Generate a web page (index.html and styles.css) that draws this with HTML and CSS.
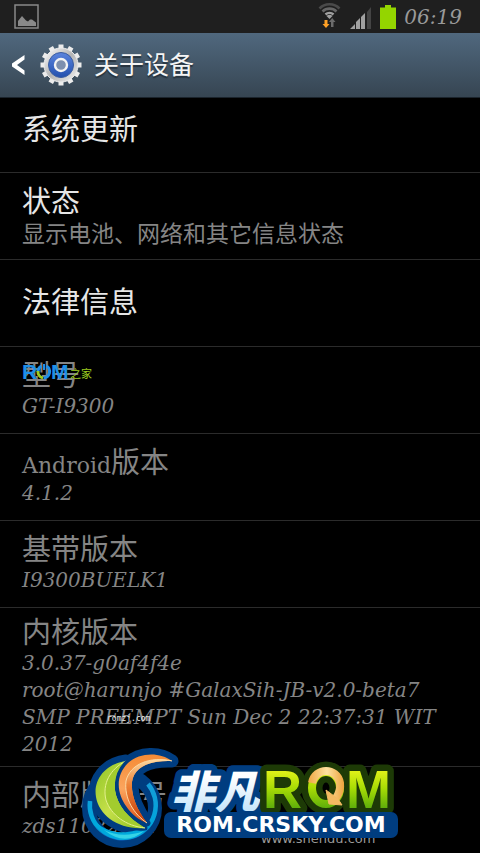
FILE: index.html
```
<!DOCTYPE html>
<html lang="zh-CN">
<head>
<meta charset="utf-8">
<meta name="viewport" content="width=device-width, initial-scale=1">
<title>关于设备</title>
<link rel="stylesheet" href="styles.css">
</head>
<body>
<div class="screen">
  <div class="status">
    <svg class="status-picture" width="26" height="26" viewBox="0 0 26 26" aria-hidden="true">
      <rect x="1" y="1" width="23" height="23" fill="none" stroke="#898989" stroke-width="1.5"/>
      <path d="M4 22v-5l4-5 4 4.500 2 1 2-2h2l4 3v3.500z" fill="#898989"/>
    </svg>
    <div class="status-right">
      <svg width="24" height="26" viewBox="0 0 24 26" aria-hidden="true">
        <g fill="none" stroke-width="2.600">
          <path d="M1.500 5.500a14 14 0 0 1 20 0" stroke="#4a4a4a"/>
          <path d="M4.500 8.500a10 10 0 0 1 14 0" stroke="#666"/>
          <path d="M7.500 11.500a6 6 0 0 1 8 0" stroke="#a0a0a0"/>
        </g>
        <path d="M8.500 13a4.500 4.500 0 0 1 6 0l-3 3z" fill="#a0a0a0"/>
        <path d="M6.500 17h3v4h2l-3.500 4-3.500-4h2z" fill="#ffa126"/>
        <path d="M13 24h2.500v-5h2l-3.300-4-3.200 4h2z" fill="#6b6b6b"/>
      </svg>
      <svg width="22" height="22" viewBox="0 0 22 22" aria-hidden="true">
        <path d="M0 22l5-5v5zM6 22v-7l4-4v11zM11 22V10l4-4v16z" fill="#a0a0a0"/>
        <path d="M17 22V5l4-5v22z" fill="#444"/>
      </svg>
      <svg width="16" height="24" viewBox="0 0 16 24" aria-hidden="true">
        <path d="M5 0h6v2.500h5V24H0V2.500h5z" fill="#94d500"/>
      </svg>
      <span class="clock">06:19</span>
    </div>
  </div>

  <header class="header">
    <a class="back" href="#" aria-label="返回">
      <svg width="13" height="20" viewBox="0 0 13 20"><path d="M12.500 0v4.500L5 10l7.500 5.500V20L0 11.500v-3z" fill="#fff"/></svg>
    </a>
    <svg class="gear" width="42" height="42" viewBox="-21 -21 42 42" aria-hidden="true">
      <defs>
        <linearGradient id="metal" x1="0" y1="0" x2="1" y2="1"><stop offset="0" stop-color="#fff"/><stop offset=".5" stop-color="#b4b4b4"/><stop offset="1" stop-color="#f4f4f4"/></linearGradient>
        <linearGradient id="blue" x1="0" y1="0" x2="0" y2="1"><stop offset="0" stop-color="#5b84dd"/><stop offset="1" stop-color="#2350ae"/></linearGradient>
      </defs>
      <g stroke="#ececec" stroke-width="5">
        <path d="M0-20.500V20.500"/>
        <path d="M0-20.500V20.500" transform="rotate(30)"/>
        <path d="M0-20.500V20.500" transform="rotate(60)"/>
        <path d="M0-20.500V20.500" transform="rotate(90)"/>
        <path d="M0-20.500V20.500" transform="rotate(120)"/>
        <path d="M0-20.500V20.500" transform="rotate(150)"/>
      </g>
      <circle r="17" fill="url(#metal)" stroke="#ececec"/>
      <circle r="12.500" fill="url(#blue)" stroke="#3a5ca0"/>
      <circle r="6" fill="#7d8fae" stroke="#f3f3f3" stroke-width="2.400"/>
    </svg>
    <h1 class="header-title">关于设备</h1>
  </header>

  <main class="list">
    <section class="row row-first"><h2 class="title">系统更新</h2></section>
    <section class="row"><h2 class="title">状态</h2><p class="note">显示电池、网络和其它信息状态</p></section>
    <section class="row"><h2 class="title">法律信息</h2></section>
    <section class="row dim">
      <h2 class="title">型号
        <svg class="mark-home" width="72" height="22" viewBox="0 0 72 22">
          <text class="mark-rom" x="0" y="18">R</text>
          <text class="mark-rom" x="29" y="18">M</text>
          <path d="M19.500 5a6.500 6.500 0 0 0-3.500 6" fill="none" stroke="#1e8fe8" stroke-width="3"/>
          <path d="M16 10a6.500 6.500 0 0 0 5 7" fill="none" stroke="#9ccc1f" stroke-width="3"/>
          <path d="M24.500 5a6.500 6.500 0 0 1-3 12" fill="none" stroke="#1e8fe8" stroke-width="3"/>
          <path d="M22 3v6" fill="none" stroke="#1e8fe8" stroke-width="2"/>
          <text class="mark-zh" x="48" y="17">之家</text>
        </svg>
      </h2>
      <p class="value">GT-I9300</p>
    </section>
    <section class="row dim"><h2 class="title"><span class="latin">Android</span>版本</h2><p class="value">4.1.2</p></section>
    <section class="row dim"><h2 class="title">基带版本</h2><p class="value">I9300BUELK1</p></section>
    <section class="row dim row-kernel">
      <h2 class="title">内核版本</h2>
      <p class="value">3.0.37-g0af4f4e<br>root@harunjo #GalaxSih-JB-v2.0-beta7<br>SMP PREEMPT Sun Dec 2 22:37:31 WIT<br>2012</p>
      <span class="mark-small">romzj.com</span>
    </section>
    <section class="row dim"><h2 class="title">内部版本号</h2><p class="value">zds11022011</p></section>
  </main>

  <div class="banner">
    <span class="mark-site">www.shendu.com</span>
    <svg class="logo" width="320" height="106" viewBox="80 747 320 106">
      <defs>
        <linearGradient id="lime" x1="0" y1="0" x2="1" y2="1"><stop offset="0" stop-color="#8fc424"/><stop offset=".5" stop-color="#c5e04a"/><stop offset="1" stop-color="#8cbf1c"/></linearGradient>
        <linearGradient id="orange" x1="0" y1="0" x2="0" y2="1"><stop offset="0" stop-color="#f58b35"/><stop offset=".5" stop-color="#fba55e"/><stop offset="1" stop-color="#e0561a"/></linearGradient>
        <linearGradient id="ember" x1="0" y1="0" x2="0" y2="1"><stop offset="0" stop-color="#fdd9a0"/><stop offset=".4" stop-color="#ee8338"/><stop offset="1" stop-color="#c43c08"/></linearGradient>
        <linearGradient id="ring" x1="0" y1="0" x2="0" y2="1"><stop offset="0" stop-color="#159dd8"/><stop offset=".75" stop-color="#00a5dc"/><stop offset="1" stop-color="#0a62c0"/></linearGradient>
        <linearGradient id="ice" x1="0" y1="0" x2="0" y2="1"><stop offset=".3" stop-color="#fff"/><stop offset="1" stop-color="#b5def9"/></linearGradient>
        <linearGradient id="green" gradientUnits="userSpaceOnUse" x1="0" y1="768" x2="0" y2="808"><stop offset="0" stop-color="#eaf51c"/><stop offset=".5" stop-color="#a8dc05"/><stop offset="1" stop-color="#5fae0a"/></linearGradient>
        <linearGradient id="gold" gradientUnits="userSpaceOnUse" x1="310" y1="0" x2="344" y2="0"><stop offset="0" stop-color="#f0ad4c"/><stop offset=".5" stop-color="#ffe2a0"/><stop offset="1" stop-color="#eda33e"/></linearGradient>
      </defs>
      <circle cx="122" cy="808" r="33" fill="none" stroke="#003d80" stroke-width="14"/>
      <g fill="#003d80" stroke="#003d80" stroke-width="13" stroke-linejoin="round">
        <path d="M172 761C160 752 140 752 128 763C114 777 118 795 126 806C132 815 139 820 147 823C136 808 131 795 132 782C134 768 148 760 172 761z"/>
        <path d="M126 761C105 764 93 780 96 797C99 815 118 830 145 828C128 818 117 805 115 790C114 778 118 770 126 761z"/>
      </g>
      <path d="M148 784a33 33 0 1 1-58 17" fill="none" stroke="url(#ring)" stroke-width="4.500"/>
      <path d="M89 812C98 831 122 840 151 824C138 848 98 846 89 812z" fill="#00a9dc"/>
      <path d="M104 830q18 9 40 1q-19 16-40-1z" fill="#36d3e6"/>
      <path d="M126 761C105 764 93 780 96 797C99 815 118 830 145 828C128 818 117 805 115 790C114 778 118 770 126 761z" fill="url(#lime)" stroke="#003d80" stroke-width="5" stroke-linejoin="round" paint-order="stroke"/>
      <path d="M126 761C110 769 102 784 106 800C111 815 126 826 145 828C128 818 117 805 115 790C114 778 118 770 126 761z" fill="#a2cc2e"/>
      <path d="M126 761C110 769 102 784 106 800C111 815 126 826 145 828" fill="none" stroke="#e4f08e"/>
      <path d="M172 761C160 752 140 752 128 763C114 777 118 795 126 806C132 815 139 820 147 823C136 808 131 795 132 782C134 768 148 760 172 761z" fill="url(#orange)" stroke="#003d80" stroke-width="7" stroke-linejoin="round" paint-order="stroke"/>
      <path d="M172 761C150 756 130 764 126 781C124 799 134 814 147 823C136 808 131 795 132 782C134 768 148 760 172 761z" fill="url(#ember)"/>
      <path d="M172 761C150 756 130 764 126 781C124 799 134 814 147 823" fill="none" stroke="#fcd9a4"/>

      <text class="logo-zh" x="171" y="808">非凡</text>

      <ellipse cx="326" cy="788" rx="14" ry="16" fill="none" stroke="#1d3a06" stroke-width="21"/>
      <g class="logo-green">
        <text x="263" y="808">R</text>
        <text x="346" y="808">M</text>
      </g>
      <ellipse cx="326" cy="788" rx="14" ry="16" fill="none" stroke="url(#green)" stroke-width="8"/>
      <path d="M312 783C315 767 337 767 340 783Q341 791 336 798" fill="none" stroke="url(#gold)" stroke-width="8"/>
      <path d="M326 790l3 14 13 1-4-6z" fill="#f5bb62" stroke="#f5bb62" stroke-linejoin="round"/>

      <rect x="164" y="812" width="234" height="26" rx="7" fill="#003d80"/>
      <text class="logo-url" x="281" y="832" text-anchor="middle">ROM.CRSKY.COM</text>
    </svg>
  </div>
</div>
</body>
</html>
```
FILE: styles.css
```
* { box-sizing: border-box; }

body {
  margin: 0;
  background: #000;
  font-family: "Noto Sans CJK SC", sans-serif;
}

.screen {
  position: relative;
  height: 100vh;
  overflow: hidden;
}

.status {
  display: flex;
  justify-content: space-between;
  height: 33px;
  padding: 4px 18px 4px 14px;
  background: #1f1f1f;
}

.status-right {
  display: flex;
  align-items: flex-end;
  gap: 8px;
}

.clock {
  color: #999;
  font: italic 20px/24px "DejaVu Serif", serif;
}

.header {
  display: flex;
  align-items: center;
  height: 65px;
  padding-left: 12px;
  background: linear-gradient(#50687e, #364552);
  border-bottom: 1px solid #1b242c;
}

.back { display: flex; }

.gear {
  margin: 0 12px 0 15px;
}

.header-title {
  margin: 0;
  padding-bottom: 4px;
  color: #f5f5f5;
  font-size: 25px;
  font-weight: 400;
  line-height: 36px;
  text-shadow: 0 2px 1px #26323d;
}

.row {
  position: relative;
  display: flex;
  flex-direction: column;
  justify-content: center;
  gap: 2px;
  min-height: 87px;
  padding: 0 22px 6px;
  border-bottom: 1px solid #2b2b2b;
  color: #e6e6e6;
}

.row-first {
  min-height: 75px;
  padding-bottom: 16px;
}

.row-kernel {
  padding-top: 4px;
  padding-bottom: 8px;
}

.dim { color: #858585; }

.title {
  position: relative;
  margin: 0;
  font-size: 29px;
  font-weight: 400;
  line-height: 36px;
}

.latin {
  font-family: "DejaVu Serif", serif;
  font-size: 22px;
  line-height: 1;
}

.note,
.value {
  margin: 0;
  color: #858585;
  line-height: 27px;
  white-space: nowrap;
}

.note { font-size: 23px; }

.value {
  font-family: "DejaVu Serif", serif;
  font-size: 20px;
  font-style: italic;
}

.mark-home {
  position: absolute;
  left: 0;
  top: 6px;
}

.mark-rom {
  fill: #1e8fe8;
  font: 700 21px "Liberation Sans", sans-serif;
}

.mark-zh {
  fill: #9ccc1f;
  font: 11px "Noto Sans CJK SC", sans-serif;
}

.mark-small {
  position: absolute;
  left: 107px;
  top: 105px;
  color: #eee;
  font: 8px/12px "DejaVu Sans Mono", monospace;
}

.banner {
  position: absolute;
  left: 80px;
  bottom: 0;
}

.logo {
  position: relative;
  display: block;
}

.mark-site {
  position: absolute;
  left: 181px;
  bottom: 6px;
  color: #999;
  font: 13px/16px "DejaVu Sans", sans-serif;
}

.logo-zh {
  fill: url(#ice);
  stroke: #003d80;
  stroke-width: 13px;
  stroke-linejoin: round;
  paint-order: stroke;
  font: italic 900 44px "Noto Sans CJK SC", sans-serif;
}

.logo-url {
  fill: #fff;
  font: 700 22px "DejaVu Sans", sans-serif;
}

.logo-green {
  fill: url(#green);
  stroke: #1d3a06;
  stroke-width: 13px;
  stroke-linejoin: round;
  paint-order: stroke;
  font: 700 54px "Liberation Sans", sans-serif;
}
```
